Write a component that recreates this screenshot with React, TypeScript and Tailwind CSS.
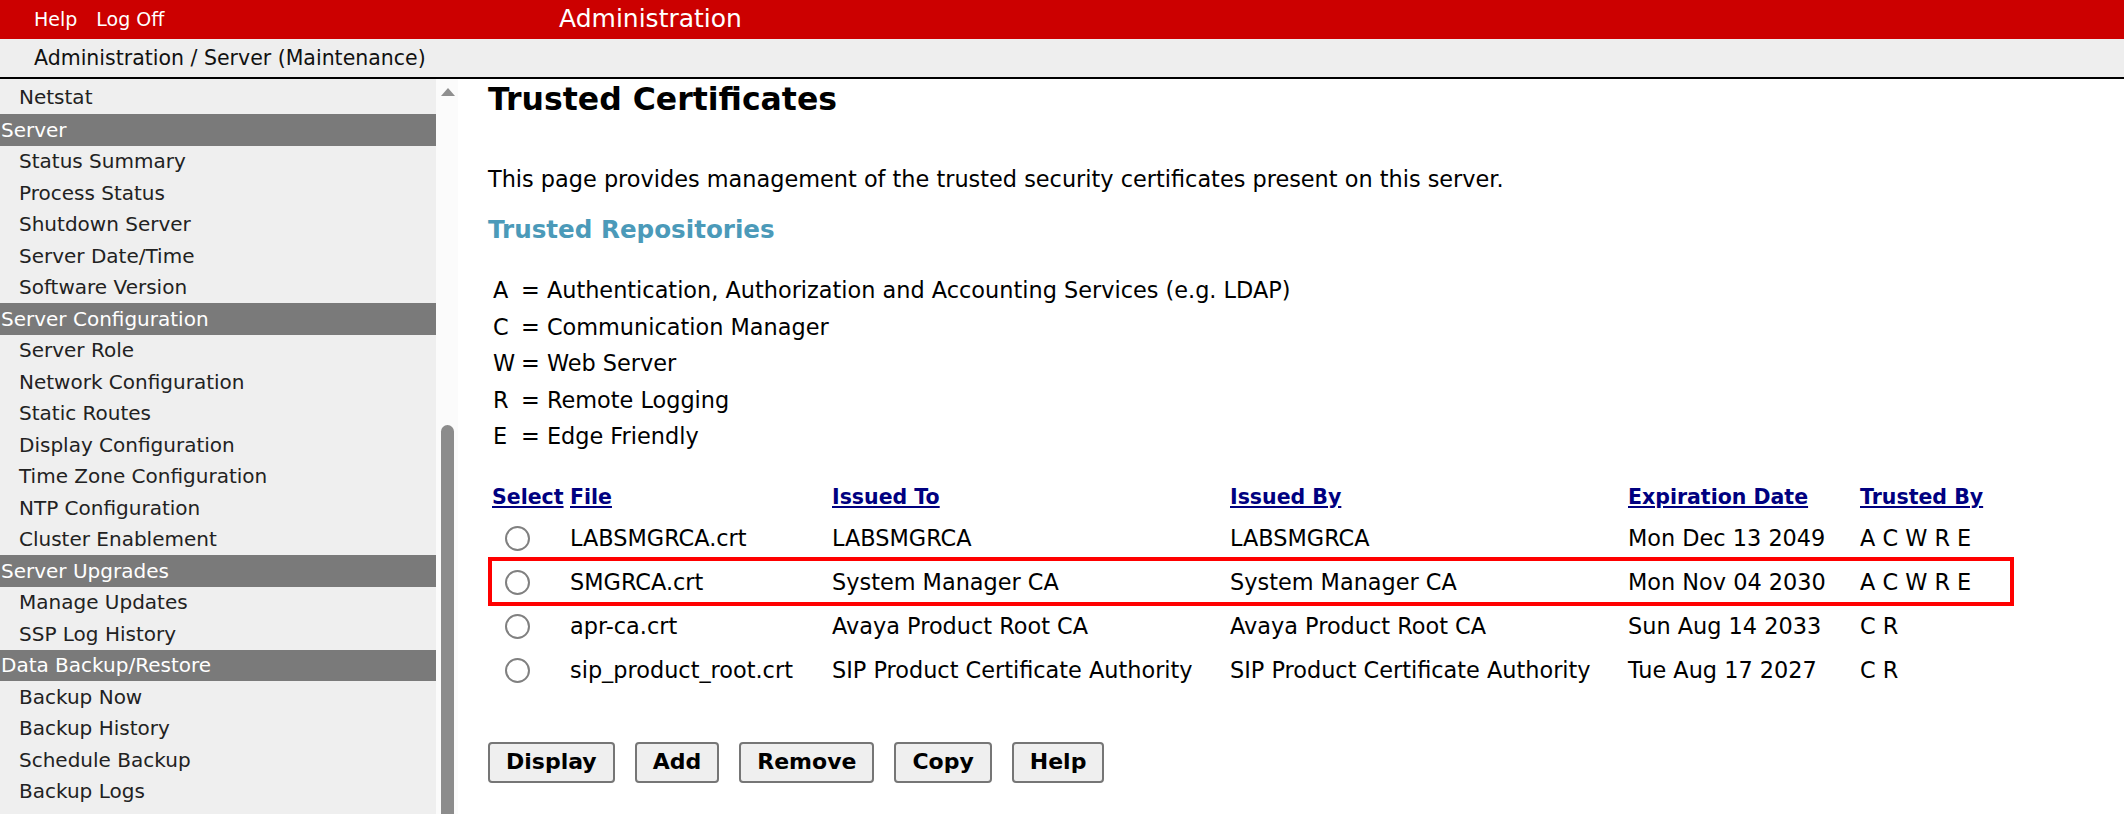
import React from "react";

type NavItem = { label: string; header?: boolean };

const nav: NavItem[] = [
  { label: "Server", header: true },
  { label: "Status Summary" },
  { label: "Process Status" },
  { label: "Shutdown Server" },
  { label: "Server Date/Time" },
  { label: "Software Version" },
  { label: "Server Configuration", header: true },
  { label: "Server Role" },
  { label: "Network Configuration" },
  { label: "Static Routes" },
  { label: "Display Configuration" },
  { label: "Time Zone Configuration" },
  { label: "NTP Configuration" },
  { label: "Cluster Enablement" },
  { label: "Server Upgrades", header: true },
  { label: "Manage Updates" },
  { label: "SSP Log History" },
  { label: "Data Backup/Restore", header: true },
  { label: "Backup Now" },
  { label: "Backup History" },
  { label: "Schedule Backup" },
  { label: "Backup Logs" },
];

const legend = [
  ["A", "Authentication, Authorization and Accounting Services (e.g. LDAP)"],
  ["C", "Communication Manager"],
  ["W", "Web Server"],
  ["R", "Remote Logging"],
  ["E", "Edge Friendly"],
];

const certs = [
  ["LABSMGRCA.crt", "LABSMGRCA", "LABSMGRCA", "Mon Dec 13 2049", "A C W R E"],
  ["SMGRCA.crt", "System Manager CA", "System Manager CA", "Mon Nov 04 2030", "A C W R E"],
  ["apr-ca.crt", "Avaya Product Root CA", "Avaya Product Root CA", "Sun Aug 14 2033", "C R"],
  ["sip_product_root.crt", "SIP Product Certificate Authority", "SIP Product Certificate Authority", "Tue Aug 17 2027", "C R"],
];

const cols = "grid grid-cols-[78px_262px_398px_398px_232px_200px]";

function Sidebar() {
  return (
    <div className="flex h-full">
      <div className="w-[436px] bg-[#efefef] text-[20px] text-[#222]">
        <div className="h-[35px] flex items-center pl-[19px]">Netstat</div>
        {nav.map((n) =>
          n.header ? (
            <div key={n.label} className="h-[31.5px] flex items-center bg-[#7a7a7a] text-white pl-[1px]">
              {n.label}
            </div>
          ) : (
            <div key={n.label} className="h-[31.5px] flex items-center pl-[19px]">
              {n.label}
            </div>
          )
        )}
      </div>
      <div className="w-[22px] bg-[#fbfbfb] flex flex-col items-start pl-[5px] pt-[9px]">
        <svg width="14" height="8" viewBox="0 0 14 8">
          <path d="M7 0 L14 8 L0 8 Z" fill="#8f8f8f" />
        </svg>
        <div className="mt-[329px] w-[13px] flex-1 rounded-t-full bg-[#8c8c8c]" />
      </div>
    </div>
  );
}

function Button({ label }: { label: string }) {
  return (
    <button className="h-[41px] px-[16px] rounded-[4px] border-2 border-[#767676] bg-[#efefef] font-bold text-[22px] text-black leading-none">
      {label}
    </button>
  );
}

export default function App() {
  return (
    <div className="h-[814px] w-full overflow-hidden flex flex-col bg-white font-['DejaVu_Sans',Verdana,sans-serif]">
      <header className="h-[39px] bg-[#cc0000] text-white flex items-center shrink-0">
        <div className="pl-[34px] flex gap-[19px] text-[19px] w-[559px]">
          <span>Help</span>
          <span>Log Off</span>
        </div>
        <div className="text-[25px] -mt-[2px]">Administration</div>
      </header>
      <div className="h-[38px] bg-[#eeeeee] flex items-center pl-[34px] text-[20.5px] text-[#111] shrink-0">
        Administration / Server (Maintenance)
      </div>
      <div className="h-[2px] bg-black shrink-0" />
      <div className="flex flex-1 min-h-0">
        <Sidebar />
        <main className="flex-1 pl-[30px] text-black text-[22.4px]">
          <h1 className="mt-[1px] text-[31.5px] leading-[38px] font-bold">Trusted Certificates</h1>
          <p className="mt-[45px] leading-[32px]">
            This page provides management of the trusted security certificates present on this server.
          </p>
          <h2 className="mt-[19px] leading-[32px] text-[24.6px] font-bold text-[#4b9ab9]">
            Trusted Repositories
          </h2>
          <div className="mt-[26px] pl-[5px]">
            {legend.map(([k, v]) => (
              <div key={k} className="flex leading-[36.5px]">
                <span className="w-[28px]">{k}</span>
                <span>= {v}</span>
              </div>
            ))}
          </div>
          <div className="mt-[24px]">
            <div className={`${cols} h-[38px] items-center font-bold text-[20.5px] text-[#000080] underline`}>
              <span className="pl-[4px]">Select</span>
              <span className="pl-[4px]">File</span>
              <span className="pl-[4px]">Issued To</span>
              <span className="pl-[4px]">Issued By</span>
              <span className="pl-[4px]">Expiration Date</span>
              <span className="pl-[4px]">Trusted By</span>
            </div>
            {certs.map((c, i) => (
              <div key={c[0]} className={`${cols} relative h-[44px] items-center`}>
                <span className="pl-[17px] flex">
                  <span className="w-[25px] h-[25px] rounded-full border-2 border-[#808080] bg-white" />
                </span>
                {c.map((v, j) => (
                  <span key={j} className="pl-[4px] whitespace-nowrap">
                    {v}
                  </span>
                ))}
                {i === 1 && (
                  <div className="absolute left-0 -top-[4px] -bottom-[1px] w-[1526px] border-4 border-[#ff0000]" />
                )}
              </div>
            ))}
          </div>
          <div className="mt-[49px] flex gap-[20px]">
            <Button label="Display" />
            <Button label="Add" />
            <Button label="Remove" />
            <Button label="Copy" />
            <Button label="Help" />
          </div>
        </main>
      </div>
    </div>
  );
}
